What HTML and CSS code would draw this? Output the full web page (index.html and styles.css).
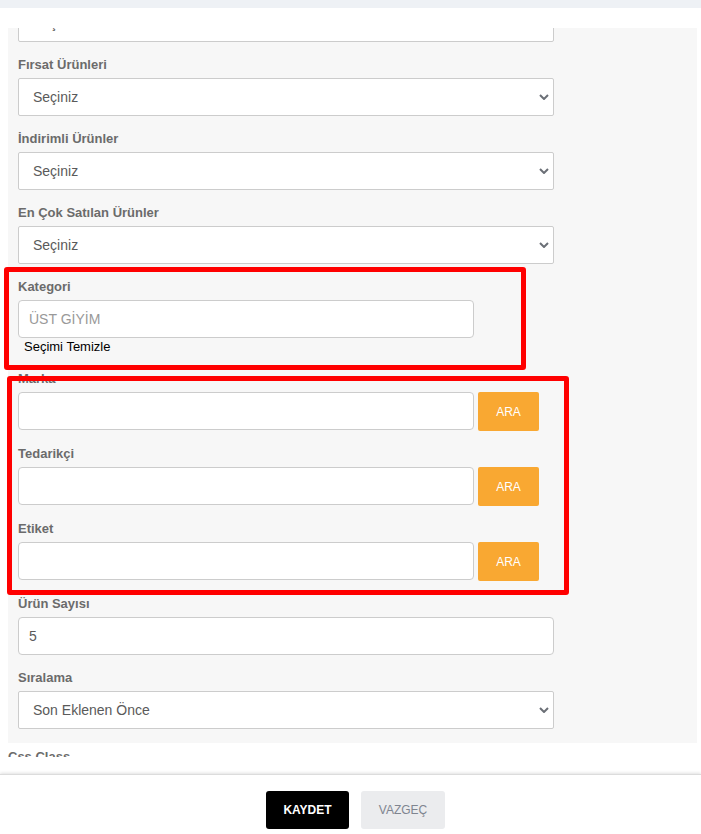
FILE: index.html
```html
<!DOCTYPE html>
<html lang="tr">
<head>
<meta charset="utf-8">
<title>Form</title>
<link rel="stylesheet" href="styles.css">
</head>
<body>
<div class="topbar"></div>
<div class="modal">
  <div class="modal-head"></div>
  <div class="modal-body">
    <div class="panel">
      <div class="field first">
        <div class="select-wrap">
          <select class="control select"><option>Seçiniz</option></select>
          <svg class="chev" width="10" height="6" viewBox="0 0 10 6"><path d="M1 1 L5 5 L9 1" fill="none" stroke="#6b6f76" stroke-width="2"/></svg>
        </div>
      </div>
      <div class="field">
        <label class="lbl">Fırsat Ürünleri</label>
        <div class="select-wrap">
          <select class="control select"><option>Seçiniz</option></select>
          <svg class="chev" width="10" height="6" viewBox="0 0 10 6"><path d="M1 1 L5 5 L9 1" fill="none" stroke="#6b6f76" stroke-width="2"/></svg>
        </div>
      </div>
      <div class="field">
        <label class="lbl">İndirimli Ürünler</label>
        <div class="select-wrap">
          <select class="control select"><option>Seçiniz</option></select>
          <svg class="chev" width="10" height="6" viewBox="0 0 10 6"><path d="M1 1 L5 5 L9 1" fill="none" stroke="#6b6f76" stroke-width="2"/></svg>
        </div>
      </div>
      <div class="field">
        <label class="lbl">En Çok Satılan Ürünler</label>
        <div class="select-wrap">
          <select class="control select"><option>Seçiniz</option></select>
          <svg class="chev" width="10" height="6" viewBox="0 0 10 6"><path d="M1 1 L5 5 L9 1" fill="none" stroke="#6b6f76" stroke-width="2"/></svg>
        </div>
      </div>
      <div class="field">
        <label class="lbl">Kategori</label>
        <input class="control input short" type="text" placeholder="ÜST GİYİM">
        <div class="clear">Seçimi Temizle</div>
      </div>
      <div class="field">
        <label class="lbl">Marka</label>
        <div class="row">
          <input class="control input short" type="text">
          <button class="btn-ara">ARA</button>
        </div>
      </div>
      <div class="field">
        <label class="lbl">Tedarikçi</label>
        <div class="row">
          <input class="control input short" type="text">
          <button class="btn-ara">ARA</button>
        </div>
      </div>
      <div class="field">
        <label class="lbl">Etiket</label>
        <div class="row">
          <input class="control input short" type="text">
          <button class="btn-ara">ARA</button>
        </div>
      </div>
      <div class="field">
        <label class="lbl">Ürün Sayısı</label>
        <input class="control input" type="text" value="5">
      </div>
      <div class="field">
        <label class="lbl">Sıralama</label>
        <div class="select-wrap">
          <select class="control select"><option>Son Eklenen Önce</option></select>
          <svg class="chev" width="10" height="6" viewBox="0 0 10 6"><path d="M1 1 L5 5 L9 1" fill="none" stroke="#6b6f76" stroke-width="2"/></svg>
        </div>
      </div>
    </div>
    <label class="lbl outside">Css Class</label>
  </div>
  <div class="spacer"></div>
  <div class="modal-foot">
    <button class="btn btn-save">KAYDET</button>
    <button class="btn btn-cancel">VAZGEÇ</button>
  </div>
</div>
<div class="mark mark1"></div>
<div class="mark mark2"></div>
</body>
</html>
```
FILE: styles.css
```css
* { box-sizing: border-box; }
html, body {
  margin: 0;
  padding: 0;
  height: 834px;
  overflow: hidden;
  background: #fff;
  font-family: "Liberation Sans", Arial, sans-serif;
}
.topbar {
  height: 8px;
  background: #eef1f5;
}
.modal {
  background: #fff;
}
.modal-head {
  height: 20px;
}
.modal-body {
  height: 729px;
  overflow: hidden;
  padding: 0 4px 0 8px;
}
.panel {
  background: #f7f7f7;
  padding: 0 10px 1px;
}
.field {
  margin-bottom: 13px;
}
.field.first {
  margin-top: -24px;
}
.lbl {
  display: block;
  font-size: 13px;
  font-weight: bold;
  line-height: 20px;
  color: #6b6b6b;
  margin-bottom: 3px;
}
.lbl.outside {
  margin: 4px 0 0;
}
.select-wrap {
  position: relative;
  width: 536px;
}
.control {
  display: block;
  width: 536px;
  height: 38px;
  border: 1px solid #ccc;
  background: #fff;
  font-family: "Liberation Sans", Arial, sans-serif;
  font-size: 14px;
  color: #5a5a5a;
  outline: none;
  margin: 0;
}
.select {
  -webkit-appearance: none;
  appearance: none;
  border-radius: 2px;
  padding: 0 30px 0 14px;
}
.chev {
  position: absolute;
  right: 5px;
  top: 16px;
}
.input {
  border-radius: 4px;
  padding: 0 10px;
}
.input::placeholder {
  color: #999;
}
.short {
  width: 456px;
}
.clear {
  font-size: 13px;
  line-height: 18px;
  color: #000;
  padding-left: 6px;
}
.row {
  display: flex;
  gap: 4px;
  align-items: flex-start;
}
.btn-ara {
  width: 61px;
  height: 39px;
  border: none;
  border-radius: 2px;
  background: #f9a832;
  color: #fff;
  font-family: "Liberation Sans", Arial, sans-serif;
  font-size: 12px;
  padding: 0;
}
.spacer {
  height: 17px;
}
.modal-foot {
  border-top: 1px solid #dcdcdc;
  box-shadow: 0 -1px 3px rgba(0, 0, 0, 0.12);
  padding: 16px 0 0 10px;
  display: flex;
  justify-content: center;
  gap: 12px;
  height: 60px;
}
.btn {
  height: 38px;
  border: none;
  border-radius: 3px;
  font-family: "Liberation Sans", Arial, sans-serif;
  font-size: 12px;
  padding: 0;
}
.btn-save {
  width: 83px;
  background: #000;
  color: #fff;
  font-weight: bold;
}
.btn-cancel {
  width: 84px;
  background: #ebecee;
  color: #7f8590;
}
.mark {
  position: absolute;
  border: 5px solid #ff0000;
  border-radius: 3px;
  pointer-events: none;
}
.mark1 {
  left: 4px;
  top: 267px;
  width: 522px;
  height: 103px;
}
.mark2 {
  left: 7px;
  top: 376px;
  width: 562px;
  height: 219px;
}
```
